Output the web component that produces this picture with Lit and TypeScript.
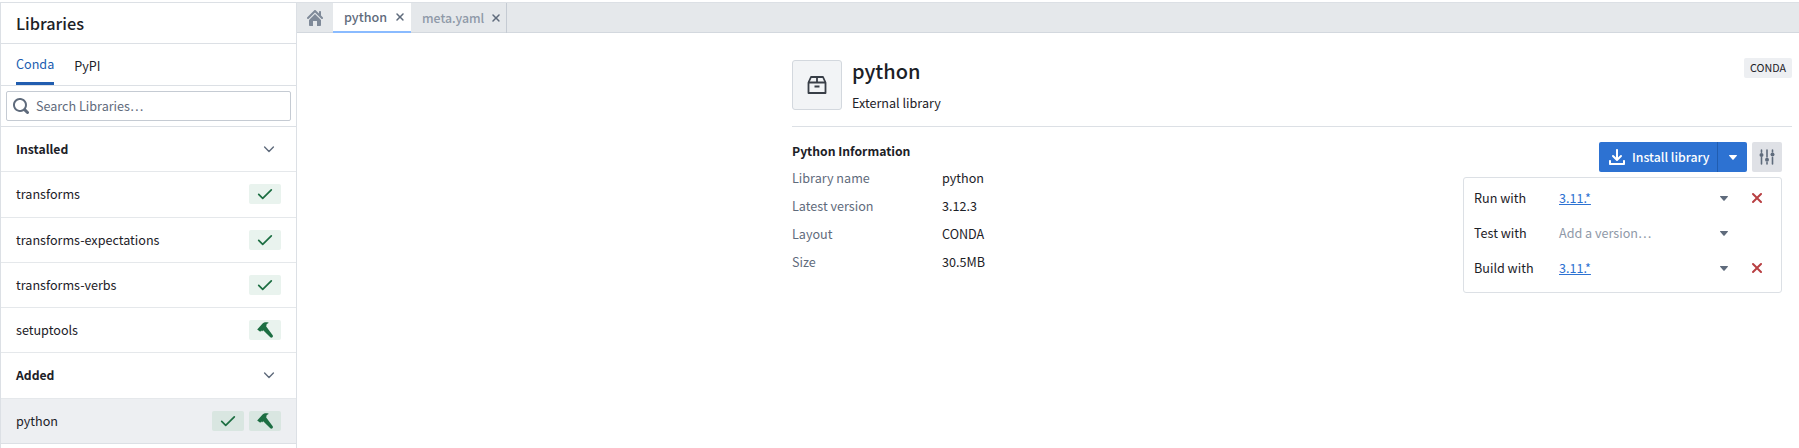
import { LitElement, html, css, svg } from "lit";
import { customElement } from "lit/decorators.js";

const icon = (d: string, size = 16) =>
  html`<svg class="icon" width=${size} height=${size} viewBox="0 0 16 16" fill="currentColor"><path d=${d}></path></svg>`;

const strokeIcon = (d: string, width: number) =>
  html`<svg class="icon" width="16" height="16" viewBox="0 0 16 16" fill="none" stroke="currentColor" stroke-width=${width} stroke-linecap="round" stroke-linejoin="round"><path d=${d}></path></svg>`;

const TICK = "M1.7 8.4 5.7 12.4 14.3 3.8";
const CHEVRON = "M3.6 6 8 10.4 12.4 6";
const SEARCH = "M15.55 13.43l-2.67-2.68a6.94 6.94 0 001.11-3.76c0-3.87-3.13-7-7-7s-7 3.13-7 7 3.13 7 7 7c1.39 0 2.68-.42 3.76-1.11l2.68 2.67a1.498 1.498 0 102.12-2.12zm-8.56-1.44c-2.76 0-5-2.24-5-5s2.24-5 5-5 5 2.24 5 5-2.24 5-5 5z";
const CARET = "M12 6.5c0-.28-.22-.5-.5-.5h-7a.495.495 0 00-.37.83l3.5 4c.09.1.22.17.37.17s.28-.07.37-.17l3.5-4c.08-.09.13-.2.13-.33z";
const CROSS = "M9.41 8l3.29-3.29c.19-.18.3-.43.3-.71a1.003 1.003 0 00-1.71-.71L8 6.59l-3.29-3.3a1.003 1.003 0 00-1.42 1.42L6.59 8 3.3 11.29c-.19.18-.3.43-.3.71a1.003 1.003 0 001.71.71L8 9.41l3.29 3.29c.18.19.43.3.71.3a1.003 1.003 0 00.71-1.71L9.41 8z";
const HOME = "M2 10v5c0 .55.45 1 1 1h3v-5h4v5h3c.55 0 1-.45 1-1v-5L8 4l-6 6zm13.71-2.71L14 5.59V2c0-.55-.45-1-1-1s-1 .45-1 1v1.59L8.71.29C8.53.11 8.28 0 8 0s-.53.11-.71.29l-7 7a1.003 1.003 0 001.42 1.42L8 2.41l6.29 6.29c.18.19.43.3.71.3a1.003 1.003 0 00.71-1.71z";
const IMPORT = "M7.29 11.71c.18.18.43.29.71.29s.53-.11.71-.29l4-4a1.003 1.003 0 00-1.42-1.42L9 8.59V1c0-.55-.45-1-1-1S7 .45 7 1v7.59l-2.29-2.3a1.003 1.003 0 00-1.42 1.42l4 4zM15 11c-.55 0-1 .45-1 1v2H2v-2c0-.55-.45-1-1-1s-1 .45-1 1v3c0 .55.45 1 1 1h14c.55 0 1-.45 1-1v-3c0-.55-.45-1-1-1z";
const HAMMER = "M0.2 7.4 5.6 1.6C6.8.4 8.2 0 11.4.4L11.6 1C10.2 1.5 9.4 2.2 9.4 3.4L9.2 4.6 15.7 13.2C16.1 13.8 16 14.6 15.4 15.2 14.8 15.8 13.9 15.8 13.3 15.2L6.2 8.2 5 9.4 4.4 8.6 3.2 9.8 0.2 7.4Z";

const sliders = svg`<g stroke="currentColor" stroke-width="1.6" stroke-linecap="round" fill="none">
  <path d="M2.5 1v2.2M2.5 8.5v6.5M8 1v7M8 13.5v1.5M13.5 1v2M13.5 8.5v6.5"></path></g>
  <circle cx="2.5" cy="6" r="2" fill="currentColor"></circle>
  <circle cx="8" cy="10.7" r="2" fill="currentColor"></circle>
  <circle cx="13.5" cy="5.6" r="2" fill="currentColor"></circle>`;

type Lib = { name: string; badges: string[]; selected?: boolean };

const installed: Lib[] = [
  { name: "transforms", badges: ["tick"] },
  { name: "transforms-expectations", badges: ["tick"] },
  { name: "transforms-verbs", badges: ["tick"] },
  { name: "setuptools", badges: ["hammer"] },
];
const added: Lib[] = [{ name: "python", badges: ["tick", "hammer"], selected: true }];

const info = [
  ["Library name", "python"],
  ["Latest version", "3.12.3"],
  ["Layout", "CONDA"],
  ["Size", "30.5MB"],
];

const envs = [
  { label: "Run with", value: "3.11.*", remove: true },
  { label: "Test with", value: "", remove: false },
  { label: "Build with", value: "3.11.*", remove: true },
];

@customElement("app-root")
export class AppRoot extends LitElement {
  static styles = css`
    :host {
      display: flex;
      width: 1799px;
      height: 448px;
      overflow: hidden;
      background: #fff;
      color: #1c2127;
      font-family: "Noto Sans CJK JP", "Noto Sans", sans-serif;
      font-size: 12.6px;
      line-height: 20px;
      padding-top: 2px;
      box-sizing: border-box;
    }
    .icon {
      display: block;
      flex: none;
    }
    .sidebar {
      width: 297px;
      flex: none;
      box-sizing: border-box;
      border: 1px solid #dce0e5;
      border-bottom: none;
      display: flex;
      flex-direction: column;
    }
    .side-title {
      height: 41px;
      box-sizing: border-box;
      padding: 0 15px;
      display: flex;
      align-items: center;
      font-size: 16.3px;
      font-weight: 500;
      border-bottom: 1px solid #dce0e5;
      flex: none;
    }
    .side-tabs {
      height: 42px;
      box-sizing: border-box;
      display: flex;
      gap: 20px;
      padding: 0 15px;
      border-bottom: 1px solid #dce0e5;
      flex: none;
    }
    .side-tab {
      display: flex;
      align-items: center;
      height: 41px;
      box-sizing: border-box;
      padding-top: 2px;
    }
    .side-tab.active {
      color: #215db0;
      border-bottom: 3px solid #215db0;
    }
    .search-wrap {
      height: 41px;
      padding: 5px 5px 0;
      border-bottom: 1px solid #dce0e5;
      box-sizing: border-box;
      flex: none;
    }
    .search {
      height: 30px;
      box-sizing: border-box;
      border: 1px solid #c5cbd3;
      border-radius: 2px;
      display: flex;
      align-items: center;
      gap: 7px;
      padding-left: 6px;
      color: #5f6b7c;
    }
    .row {
      height: 45.25px;
      box-sizing: border-box;
      display: flex;
      align-items: center;
      justify-content: space-between;
      padding: 0 15px;
      border-bottom: 1px solid #e5e8eb;
      flex: none;
    }
    .row.head {
      font-size: 12.2px;
      font-weight: 600;
    }
    .row.head .icon {
      color: #5f6b7c;
      margin-right: 4px;
    }
    .row.selected {
      background: #edeff2;
      border-bottom-color: #dce0e5;
    }
    .badges {
      display: flex;
      gap: 5px;
    }
    .badge {
      width: 32px;
      height: 20px;
      border-radius: 2px;
      background: #e9f3ee;
      color: #1c6e42;
      display: flex;
      align-items: center;
      justify-content: center;
    }
    .selected .badge {
      background: #d9e6e1;
    }
    .main {
      flex: 1;
      min-width: 0;
      display: flex;
      flex-direction: column;
    }
    .tabbar {
      height: 31px;
      box-sizing: border-box;
      background: #e5e8eb;
      border-top: 1px solid #dce0e5;
      border-bottom: 1px solid #d3d8de;
      display: flex;
      flex: none;
    }
    .home {
      width: 36px;
      display: flex;
      align-items: center;
      justify-content: center;
      color: #7f8a99;
    }
    .tab {
      display: flex;
      align-items: center;
      height: 30px;
      box-sizing: border-box;
      font-weight: 500;
      font-size: 12.3px;
      color: #8f99a8;
      padding-left: 11px;
    }
    .tab.active {
      background: #fff;
      color: #5f6b7c;
      font-size: 12.6px;
      border-bottom: 2px solid #8abbff;
      width: 78px;
      gap: 7px;
    }
    .tab.last {
      border-right: 1px solid #c5cbd3;
      width: 96px;
      gap: 6px;
    }
    .tab .icon {
      color: #5f6b7c;
    }
    .content {
      width: 1000px;
      margin-left: 495px;
      padding-top: 27px;
    }
    .head-block {
      display: flex;
      gap: 10px;
      height: 67px;
      box-sizing: border-box;
      border-bottom: 1px solid #dce0e5;
    }
    .pkg {
      width: 50px;
      height: 50px;
      box-sizing: border-box;
      background: #f2f4f6;
      border: 1px solid #d3d8de;
      border-radius: 3px;
      display: flex;
      align-items: center;
      justify-content: center;
      color: #383e47;
    }
    .names h1 {
      margin: -1px 0 0;
      font-size: 20px;
      line-height: 24px;
      font-weight: 500;
    }
    .names p {
      margin: 10px 0 0;
      line-height: 20px;
    }
    .kind {
      margin-left: auto;
      align-self: flex-start;
      height: 20px;
      width: 48px;
      margin-top: -2px;
      background: #edeff2;
      border-radius: 2px;
      font-size: 10.7px;
      line-height: 20px;
      text-align: center;
    }
    .body {
      display: flex;
      justify-content: space-between;
      padding-top: 14px;
    }
    .body h2 {
      margin: 0 0 3px;
      font-size: 12.2px;
      line-height: 20px;
      font-weight: 600;
    }
    .info {
      display: grid;
      grid-template-columns: 150px auto;
      grid-auto-rows: 28px;
      align-items: center;
    }
    .info .k {
      color: #5f6b7c;
    }
    .actions {
      width: 319px;
      margin-right: 10px;
      padding-top: 1px;
      display: flex;
      flex-direction: column;
      align-items: flex-end;
      gap: 5px;
    }
    .btns {
      display: flex;
      gap: 5px;
    }
    .install {
      width: 148px;
      height: 30px;
      background: #2d72d2;
      border-radius: 2px;
      color: #fff;
      display: flex;
      align-items: center;
      font-size: 12.3px;
      font-weight: 500;
      white-space: nowrap;
    }
    .install .main-part {
      width: 119px;
      box-sizing: border-box;
      height: 100%;
      padding-left: 10px;
      display: flex;
      align-items: center;
      gap: 7px;
      border-right: 1px solid #215db0;
    }
    .install .drop {
      flex: 1;
      display: flex;
      justify-content: center;
    }
    .tune {
      width: 30px;
      height: 30px;
      border-radius: 2px;
      background: #dfe1e6;
      color: #5f6b7c;
      display: flex;
      align-items: center;
      justify-content: center;
    }
    .panel {
      width: 319px;
      box-sizing: border-box;
      border: 1px solid #dce0e5;
      border-radius: 3px;
      padding: 2px 0 7px;
    }
    .env {
      height: 35px;
      display: grid;
      grid-template-columns: 10px 85px 157px 16px 17px 16px;
      align-items: center;
    }
    .env .label {
      grid-column: 2;
    }
    .env a {
      color: #2d72d2;
      text-decoration: underline;
    }
    .env .ph {
      color: #8f99a8;
    }
    .env .car {
      grid-column: 4;
      color: #5f6b7c;
    }
    .env .x {
      grid-column: 6;
      color: #b83f42;
    }
  `;

  private badge(kind: string) {
    return html`<span class="badge">${kind === "tick" ? strokeIcon(TICK, 1.7) : icon(HAMMER)}</span>`;
  }

  private libRow(lib: Lib) {
    return html`<div class="row ${lib.selected ? "selected" : ""}">
      <span>${lib.name}</span>
      <span class="badges">${lib.badges.map((b) => this.badge(b))}</span>
    </div>`;
  }

  render() {
    return html`
      <aside class="sidebar">
        <div class="side-title">Libraries</div>
        <div class="side-tabs">
          <div class="side-tab active">Conda</div>
          <div class="side-tab">PyPI</div>
        </div>
        <div class="search-wrap">
          <div class="search">${icon(SEARCH)}<span>Search Libraries…</span></div>
        </div>
        <div class="row head"><span>Installed</span>${strokeIcon(CHEVRON, 1.4)}</div>
        ${installed.map((l) => this.libRow(l))}
        <div class="row head"><span>Added</span>${strokeIcon(CHEVRON, 1.4)}</div>
        ${added.map((l) => this.libRow(l))}
      </aside>
      <div class="main">
        <div class="tabbar">
          <div class="home">${icon(HOME)}</div>
          <div class="tab active"><span>python</span>${icon(CROSS, 12)}</div>
          <div class="tab last"><span>meta.yaml</span>${icon(CROSS, 12)}</div>
        </div>
        <div class="content">
          <div class="head-block">
            <div class="pkg">
              <svg width="20" height="20" viewBox="0 0 20 20" fill="none" stroke="currentColor" stroke-width="1.8" stroke-linejoin="round">
                <path d="M1.5 7.5 4 2h12l2.5 5.5V18h-17V7.5Z"></path>
                <path d="M1.5 7.5h17M10 2v5.5M7.5 11.5h5"></path>
              </svg>
            </div>
            <div class="names">
              <h1>python</h1>
              <p>External library</p>
            </div>
            <div class="kind">CONDA</div>
          </div>
          <div class="body">
            <div>
              <h2>Python Information</h2>
              <div class="info">
                ${info.map(([k, v]) => html`<span class="k">${k}</span><span>${v}</span>`)}
              </div>
            </div>
            <div class="actions">
              <div class="btns">
                <div class="install">
                  <div class="main-part">${icon(IMPORT)}<span>Install library</span></div>
                  <div class="drop">${icon(CARET)}</div>
                </div>
                <div class="tune">
                  <svg class="icon" width="16" height="16" viewBox="0 0 16 16">${sliders}</svg>
                </div>
              </div>
              <div class="panel">
                ${envs.map(
                  (e) => html`<div class="env">
                    <span class="label">${e.label}</span>
                    ${e.value ? html`<a>${e.value}</a>` : html`<span class="ph">Add a version…</span>`}
                    <span class="car">${icon(CARET)}</span>
                    ${e.remove ? html`<span class="x">${icon(CROSS)}</span>` : ""}
                  </div>`
                )}
              </div>
            </div>
          </div>
        </div>
      </div>
    `;
  }
}
